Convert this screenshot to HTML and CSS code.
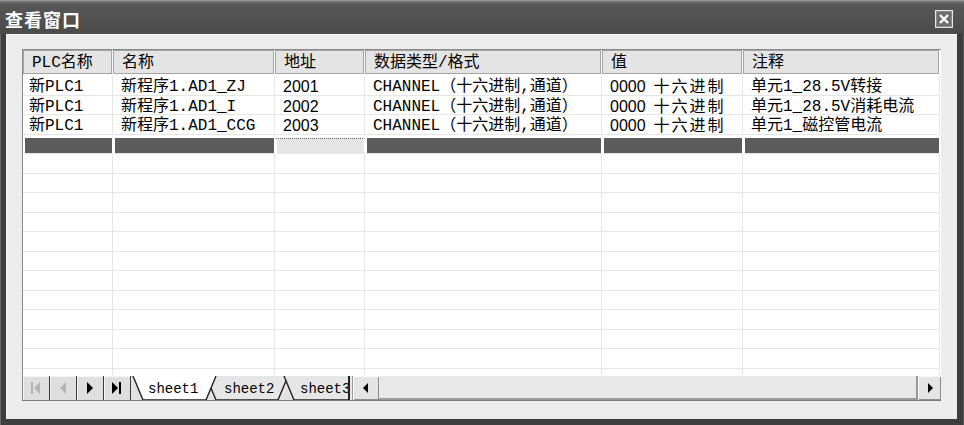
FILE: index.html
```html
<!DOCTYPE html>
<html>
  <head>
    <meta charset="utf-8">
    <title>查看窗口</title>
    <link rel="stylesheet" href="styles.css">
  </head>
  <body>
    <div class="window">
      <div class="titlebar">
        <span class="title">查看窗口</span>
        <button class="close">
          <svg width="12" height="12" viewBox="0 0 12 12"><path d="M2 2 L10 10 M10 2 L2 10" stroke="#fff" stroke-width="2.4"/></svg>
        </button>
      </div>
      <div class="client">
        <div class="sheet">
          <div class="grid">
            <div class="row head">
              <div class="cell">PLC名称</div>
              <div class="cell">名称</div>
              <div class="cell">地址</div>
              <div class="cell">数据类型/格式</div>
              <div class="cell">值</div>
              <div class="cell">注释</div>
            </div>
            <div class="row">
              <div class="cell first">新PLC1</div>
              <div class="cell">新程序1.AD1_ZJ</div>
              <div class="cell num">2001</div>
              <div class="cell">CHANNEL（十六进制,通道）</div>
              <div class="cell"><span class="digits">0000</span><span class="wide">十六进制</span></div>
              <div class="cell">单元1_28.5V转接</div>
            </div>
            <div class="row">
              <div class="cell first">新PLC1</div>
              <div class="cell">新程序1.AD1_I</div>
              <div class="cell num">2002</div>
              <div class="cell">CHANNEL（十六进制,通道）</div>
              <div class="cell"><span class="digits">0000</span><span class="wide">十六进制</span></div>
              <div class="cell">单元1_28.5V消耗电流</div>
            </div>
            <div class="row">
              <div class="cell first">新PLC1</div>
              <div class="cell">新程序1.AD1_CCG</div>
              <div class="cell num">2003</div>
              <div class="cell">CHANNEL（十六进制,通道）</div>
              <div class="cell"><span class="digits">0000</span><span class="wide">十六进制</span></div>
              <div class="cell">单元1_磁控管电流</div>
            </div>
            <div class="row selected">
              <div class="cell"></div>
              <div class="cell"></div>
              <div class="cell focus"></div>
              <div class="cell"></div>
              <div class="cell"></div>
              <div class="cell"></div>
            </div>
            <div class="row"><div class="cell"></div><div class="cell"></div><div class="cell"></div><div class="cell"></div><div class="cell"></div><div class="cell"></div></div>
            <div class="row"><div class="cell"></div><div class="cell"></div><div class="cell"></div><div class="cell"></div><div class="cell"></div><div class="cell"></div></div>
            <div class="row"><div class="cell"></div><div class="cell"></div><div class="cell"></div><div class="cell"></div><div class="cell"></div><div class="cell"></div></div>
            <div class="row"><div class="cell"></div><div class="cell"></div><div class="cell"></div><div class="cell"></div><div class="cell"></div><div class="cell"></div></div>
            <div class="row"><div class="cell"></div><div class="cell"></div><div class="cell"></div><div class="cell"></div><div class="cell"></div><div class="cell"></div></div>
            <div class="row"><div class="cell"></div><div class="cell"></div><div class="cell"></div><div class="cell"></div><div class="cell"></div><div class="cell"></div></div>
            <div class="row"><div class="cell"></div><div class="cell"></div><div class="cell"></div><div class="cell"></div><div class="cell"></div><div class="cell"></div></div>
            <div class="row"><div class="cell"></div><div class="cell"></div><div class="cell"></div><div class="cell"></div><div class="cell"></div><div class="cell"></div></div>
            <div class="row"><div class="cell"></div><div class="cell"></div><div class="cell"></div><div class="cell"></div><div class="cell"></div><div class="cell"></div></div>
            <div class="row"><div class="cell"></div><div class="cell"></div><div class="cell"></div><div class="cell"></div><div class="cell"></div><div class="cell"></div></div>
            <div class="row"><div class="cell"></div><div class="cell"></div><div class="cell"></div><div class="cell"></div><div class="cell"></div><div class="cell"></div></div>
            <div class="row"><div class="cell"></div><div class="cell"></div><div class="cell"></div><div class="cell"></div><div class="cell"></div><div class="cell"></div></div>
          </div>

          <div class="tabbar">
            <button class="nav">
              <svg width="10" height="12" viewBox="0 0 10 12"><rect x="0" y="0" width="2" height="12" fill="#b4b4b4"/><path d="M9 0 V12 L3 6 Z" fill="#b4b4b4"/></svg>
            </button>
            <button class="nav">
              <svg width="8" height="12" viewBox="0 0 8 12"><path d="M7 0 V12 L1 6 Z" fill="#b4b4b4"/></svg>
            </button>
            <button class="nav">
              <svg width="8" height="12" viewBox="0 0 8 12"><path d="M1 0 V12 L7 6 Z" fill="#000"/></svg>
            </button>
            <button class="nav">
              <svg width="10" height="12" viewBox="0 0 10 12"><path d="M0 0 V12 L6 6 Z" fill="#000"/><rect x="7" y="0" width="2" height="12" fill="#000"/></svg>
            </button>
            <div class="tabs">
              <svg class="tab-shapes" width="217" height="25" viewBox="0 0 217 25">
                <path d="M75 0 L85 24 L147 24 L157 0" fill="#e6e6e6" stroke="#222" stroke-width="1.4"/>
                <path d="M153 0 L163 24 L228 24 L238 0" fill="#e6e6e6" stroke="#222" stroke-width="1.4"/>
                <path d="M2 0 L12 24 L75 24 L85 0 Z" fill="#fff"/>
                <path d="M2 0 L12 24 L75 24 L85 0" fill="none" stroke="#222" stroke-width="1.4"/>
              </svg>
              <span class="tab-label active">sheet1</span>
              <span class="tab-label">sheet2</span>
              <span class="tab-label">sheet3</span>
            </div>
            <div class="splitter"></div>
            <button class="arrow left">
              <svg width="6" height="10" viewBox="0 0 6 10"><path d="M5 0 V10 L0 5 Z" fill="#000"/></svg>
            </button>
            <div class="track"></div>
            <button class="arrow right">
              <svg width="6" height="10" viewBox="0 0 6 10"><path d="M1 0 V10 L6 5 Z" fill="#000"/></svg>
            </button>
          </div>
        </div>
      </div>
    </div>
  </body>
</html>
```

FILE: styles.css
```css
:root {
  --frame: #3e3e3e;
  --face: #ececec;
  --line: #e6e6e6;
  --head: #e4e4e4;
  --dark-row: #5c5c5c;
}

*, *:before, *:after {
  box-sizing: border-box;
}

html, body {
  margin: 0;
  padding: 0;
}

body {
  width: 964px;
  height: 425px;
  overflow: hidden;
  background: var(--frame);
  font-family: "Liberation Mono", "Noto Sans CJK SC", monospace;
  font-size: 16px;
  color: #000;
}

button {
  font: inherit;
  padding: 0;
  margin: 0;
}

.window {
  height: 425px;
  display: flex;
  flex-direction: column;
  background: var(--frame);
  box-shadow: inset 1px 0 0 #6a6a6a, inset -1px 0 0 #5a5a5a;
}

/*----- TITLE BAR -----*/

.titlebar {
  height: 34px;
  flex: 0 0 auto;
  display: flex;
  align-items: center;
  justify-content: space-between;
  padding: 4px 11px 0 5px;
  background: linear-gradient(#a0a0a0 0, #6c6c6c 2px, #575757 5px, #4b4b4b 100%);
}

.title {
  font-family: "Noto Sans CJK SC", sans-serif;
  font-weight: bold;
  font-size: 18px;
  letter-spacing: 1px;
  color: #fff;
}

.close {
  width: 18px;
  height: 18px;
  display: flex;
  align-items: center;
  justify-content: center;
  background: #6e6e6e;
  border: 1px solid #e8e8e8;
  box-shadow: inset 0 0 0 1px #8a8a8a;
}

/*----- CLIENT -----*/

.client {
  flex: 1 1 auto;
  margin: 0 7px 6px 6px;
  background: var(--face);
  padding: 15px 16px 0 16px;
  box-shadow: inset 1px 1px 0 #fafafa;
}

.sheet {
  width: 919px;
}

.grid {
  height: 327px;
  background: #fff;
  border-top: 1px solid #8a8a8a;
  border-left: 1px solid #8a8a8a;
  overflow: hidden;
}

.row {
  display: grid;
  grid-template-columns: 90px 162px 90px 237px 141px 197px;
  height: 19.5px;
}

.cell {
  padding: 3px 0 0 8px;
  border-right: 1px solid var(--line);
  border-bottom: 1px solid var(--line);
  white-space: nowrap;
  overflow: hidden;
  line-height: 16px;
}

.cell.first {
  padding-left: 6px;
}

.num,
.digits {
  font-family: "Liberation Sans", sans-serif;
}

.wide {
  margin-left: 8px;
  letter-spacing: 2px;
}

.head {
  height: 24px;
  margin-bottom: 2px;
}

.head .cell {
  background: var(--head);
  border: none;
  border-right: 1px solid #fff;
  box-shadow: inset 0 0 0 1px #a4a4a4;
  padding: 2px 0 0 9px;
  line-height: 22px;
}

.selected .cell {
  background: var(--dark-row);
  border: none;
  border-top: 3px solid #fff;
  border-left: 2px solid #fff;
  border-right: 1px solid #fff;
  border-bottom: 1px solid var(--line);
}

.selected .cell.focus {
  background: #e6e6e6;
  border-top: 1px dotted #666;
  margin-top: 3px;
}

/*----- SHEET TABS -----*/

.tabbar {
  height: 25px;
  display: flex;
  background: #e2e2e2;
  border-left: 1px solid #8a8a8a;
  border-bottom: 1px solid #7a7a7a;
}

.nav {
  width: 27px;
  height: 24px;
  display: flex;
  align-items: center;
  justify-content: center;
  background: #dedede;
  border: none;
  border-right: 1px solid #3a3a3a;
  box-shadow: inset 1px 1px 0 #f4f4f4;
}

.nav:last-of-type {
  width: 26px;
}

.tabs {
  position: relative;
  width: 217px;
  height: 24px;
  overflow: hidden;
  display: flex;
  align-items: center;
}

.tab-shapes {
  position: absolute;
  left: 0;
  top: 0;
}

.tab-label {
  position: relative;
  font-size: 14px;
  width: 76px;
  padding: 3px 0 0 17px;
  flex: 0 0 auto;
  line-height: 21px;
}

.splitter {
  width: 5px;
  border-left: 2px solid #222;
  border-right: 1px solid #9a9a9a;
  background: #e8e8e8;
}

.arrow {
  height: 24px;
  display: flex;
  align-items: center;
  justify-content: center;
  background: #e4e4e4;
  border: none;
  box-shadow: inset 1px 1px 0 #fafafa, inset -1px -1px 0 #8c8c8c;
}

.arrow.left {
  width: 26px;
}

.arrow.right {
  width: 23px;
}

.track {
  flex: 1 1 auto;
  background: #e8e8e8;
  box-shadow: inset 0 -2px 0 #9a9a9a, inset -2px 0 0 #9a9a9a;
}
```
